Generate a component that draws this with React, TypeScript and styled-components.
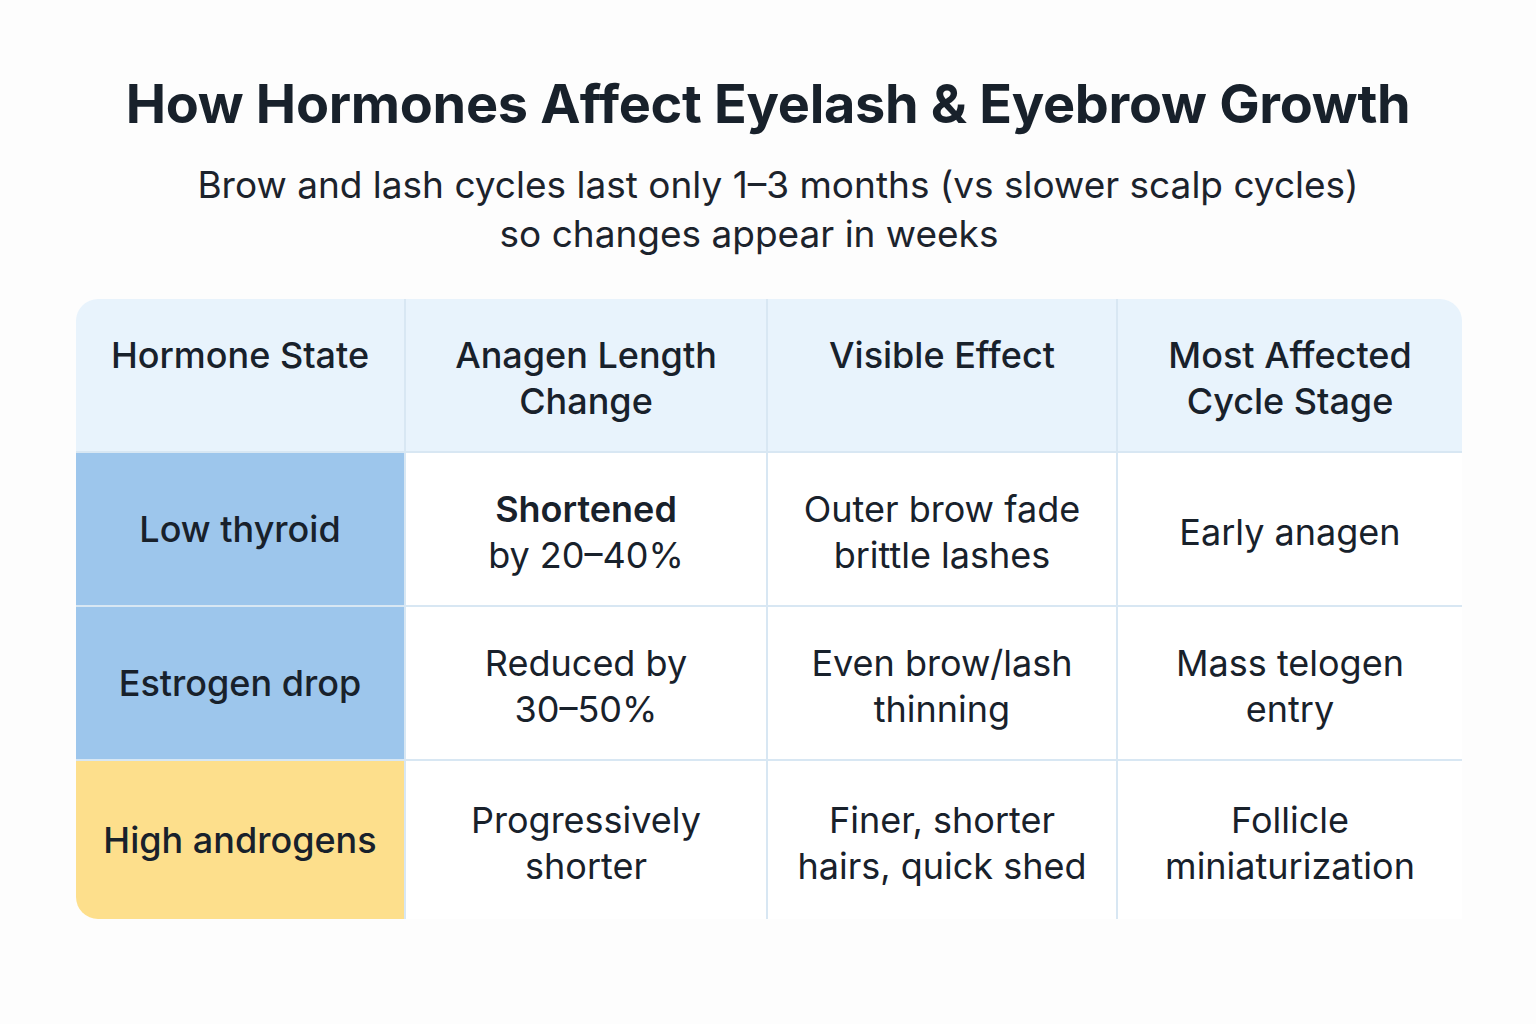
import React from "react";
import styled, { createGlobalStyle } from "styled-components";

const GlobalStyle = createGlobalStyle`
  body {
    margin: 0;
    background: #fdfdfd;
    font-family: Inter, "Open Sans", sans-serif;
    color: #18212b;
  }
`;

const Page = styled.div`
  width: 1536px;
  height: 1024px;
  display: flex;
  flex-direction: column;
  align-items: center;
  box-sizing: border-box;
  padding-top: 72px;
`;

const Title = styled.h1`
  margin: 0;
  font-size: 54px;
  font-weight: 700;
  letter-spacing: -0.3px;
  line-height: 64px;
  color: #18212b;
`;

const Subtitle = styled.div`
  margin: 24px 0 0 20px;
  display: flex;
  flex-direction: column;
  align-items: center;
  font-size: 37px;
  font-weight: 400;
  line-height: 49px;
  color: #1c232c;
`;

const SubLine = styled.span<{ $shift?: number }>`
  display: block;
  padding-right: ${(p) => p.$shift ?? 0}px;
`;

const Table = styled.div`
  margin-top: 41px;
  margin-left: 2px;
  display: grid;
  grid-template-columns: 330px 362px 350px 344px;
  grid-template-rows: 154px 154px 154px 158px;
  border-radius: 22px 22px 0 22px;
  overflow: hidden;
  background: #ffffff;
`;

type CellKind = "head" | "blue" | "yellow" | "body";

const bgFor: Record<CellKind, string> = {
  head: "#e8f3fc",
  blue: "#9dc6ec",
  yellow: "#fddf8c",
  body: "#ffffff",
};

const Cell = styled.div<{ $kind: CellKind; $last?: boolean; $bottom?: boolean }>`
  display: flex;
  align-items: ${(p) => (p.$kind === "head" ? "flex-start" : "center")};
  justify-content: center;
  text-align: center;
  box-sizing: border-box;
  padding: ${(p) =>
    p.$kind === "head" ? "33px 10px 0" : p.$kind === "body" ? "6px 10px 0" : "0 10px"};
  background: ${(p) => bgFor[p.$kind]};
  border-right: ${(p) => (p.$last ? "none" : "2px solid #d8e7f3")};
  border-bottom: ${(p) => (p.$bottom ? "none" : "2px solid #d8e7f3")};
  font-size: 36px;
  line-height: 46px;
  font-weight: ${(p) => (p.$kind === "body" ? 400 : 500)};
  color: #18212b;
`;

const Strong = styled.span`
  font-weight: 600;
`;

const rows: { state: string; kind: CellKind; cells: React.ReactNode[] }[] = [
  {
    state: "Low thyroid",
    kind: "blue",
    cells: [
      <>
        <Strong>Shortened</Strong>
        <br />
        by 20–40%
      </>,
      <>
        Outer brow fade
        <br />
        brittle lashes
      </>,
      <>Early anagen</>,
    ],
  },
  {
    state: "Estrogen drop",
    kind: "blue",
    cells: [
      <>
        Reduced by
        <br />
        30–50%
      </>,
      <>
        Even brow/lash
        <br />
        thinning
      </>,
      <>
        Mass telogen
        <br />
        entry
      </>,
    ],
  },
  {
    state: "High androgens",
    kind: "yellow",
    cells: [
      <>
        Progressively
        <br />
        shorter
      </>,
      <>
        Finer, shorter
        <br />
        hairs, quick shed
      </>,
      <>
        Follicle
        <br />
        miniaturization
      </>,
    ],
  },
];

const headers: React.ReactNode[] = [
  "Hormone State",
  <>
    Anagen Length
    <br />
    Change
  </>,
  "Visible Effect",
  <>
    Most Affected
    <br />
    Cycle Stage
  </>,
];

export default function App() {
  return (
    <Page>
      <GlobalStyle />
      <Title>How Hormones Affect Eyelash &amp; Eyebrow Growth</Title>
      <Subtitle>
        <SubLine>Brow and lash cycles last only 1–3 months (vs slower scalp cycles)</SubLine>
        <SubLine $shift={58}>so changes appear in weeks</SubLine>
      </Subtitle>
      <Table>
        {headers.map((h, i) => (
          <Cell key={i} $kind="head" $last={i === 3}>
            <span>{h}</span>
          </Cell>
        ))}
        {rows.map((r, ri) => {
          const bottom = ri === rows.length - 1;
          return (
            <React.Fragment key={r.state}>
              <Cell $kind={r.kind} $bottom={bottom}>
                <span>{r.state}</span>
              </Cell>
              {r.cells.map((c, ci) => (
                <Cell key={ci} $kind="body" $last={ci === 2} $bottom={bottom}>
                  <span>{c}</span>
                </Cell>
              ))}
            </React.Fragment>
          );
        })}
      </Table>
    </Page>
  );
}
